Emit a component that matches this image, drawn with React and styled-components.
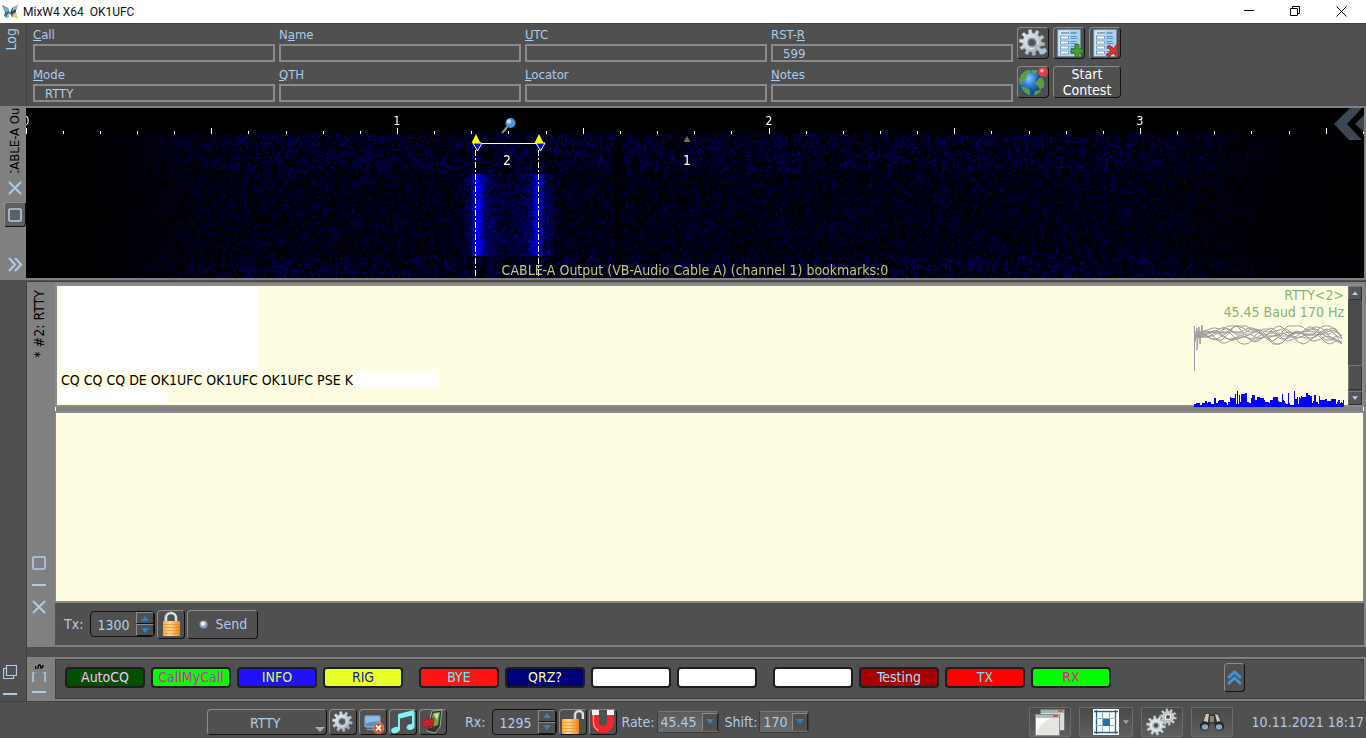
import React, { useLayoutEffect, useRef } from "react";
import styled, { createGlobalStyle } from "styled-components";

const GlobalStyle = createGlobalStyle`
  * { box-sizing: border-box; }
  body { margin: 0; background: #505050; }
  button, input, select, textarea { font: inherit; color: inherit; margin: 0; }
`;

const c = {
  bg: "#505050",
  edge: "#404040",
  grey: "#808080",
  light: "#8b8b8b",
  text: "#aecbe8",
  cream: "#fffde1",
};

/* ---------- shell ---------- */

const Window = styled.div`
  min-height: 100vh;
  display: flex;
  flex-direction: column;
  background: ${c.bg};
  color: ${c.text};
  font-family: "DejaVu Sans Condensed", "DejaVu Sans", sans-serif;
  font-size: 14px;
  line-height: 18px;
`;

const TitleBar = styled.header`
  height: 23px;
  flex: none;
  display: flex;
  align-items: center;
  background: #fff;
  color: #111;
  padding: 0 2px;
`;

const Title = styled.h1`
  margin: 0 0 0 4px;
  flex: 1;
  font-family: Roboto, "Noto Sans", sans-serif;
  font-size: 12px;
  font-weight: 400;
  line-height: 16px;
  white-space: pre;
`;

const CaptionButton = styled.button`
  width: 46px;
  height: 20px;
  padding: 0;
  border: 0;
  background: none;
  display: grid;
  place-items: center;
`;

const Vertical = styled.span`
  writing-mode: vertical-rl;
  transform: rotate(180deg);
  line-height: 18px;
  white-space: nowrap;
`;

const BevelButton = styled.button`
  width: ${(p) => p.$w || 29}px;
  height: ${(p) => p.$h || 29}px;
  flex: none;
  padding: 0;
  display: flex;
  align-items: center;
  justify-content: center;
  gap: 8px;
  border: 1px solid;
  border-color: ${c.light} #111 #111 ${c.light};
  border-radius: 4px;
  background: ${c.bg};
  color: ${(p) => p.$color || c.text};
  line-height: 16px;
`;

/* ---------- log panel ---------- */

const LogRow = styled.section`
  display: flex;
  height: 83px;
  flex: none;
`;

const LogTab = styled.div`
  width: 26px;
  flex: none;
  padding: 5px 0 0 2px;
`;

const LogBody = styled.div`
  flex: 1;
  display: flex;
  gap: 4px;
  padding: 3px 0 0 6px;
  border-left: 1px solid ${c.edge};
  border-top: 1px solid ${c.edge};
`;

const Fields = styled.form`
  flex: 0 1 980px;
  display: grid;
  grid-template-columns: repeat(4, 1fr);
  column-gap: 4px;
  row-gap: 4px;
  align-content: start;
`;

const Field = styled.div`
  display: flex;
  flex-direction: column;
  font-size: 13px;
`;

const FieldLabel = styled.label`
  line-height: 16px;
  height: 17px;
`;

const FieldInput = styled.input`
  width: 100%;
  height: 18px;
  margin-bottom: 1px;
  padding: 2px 0 0 10px;
  border: 2px solid ${c.light};
  background: ${c.bg};
  color: ${c.text};
  font-size: 13px;
`;

const LogButtons = styled.div`
  display: flex;
  flex-direction: column;
  gap: 7px;
`;

const ButtonRow = styled.div`
  display: flex;
  gap: 4px;
`;

/* ---------- waterfall ---------- */

const WaterfallRow = styled.section`
  display: flex;
  flex: none;
  height: 174px;
  padding: 2px 2px 2px 0;
  background: ${c.grey};
`;

const WaterfallTab = styled.div`
  width: 26px;
  flex: none;
  display: flex;
  flex-direction: column;
  align-items: center;
  padding-left: 3px;
  color: #000;
  font-size: 13px;
`;

const ClippedName = styled.div`
  height: 65px;
  margin-bottom: 7px;
  overflow: hidden;
  display: flex;
  flex-direction: column;
  justify-content: center;
`;

const TabIcon = styled.button`
  width: ${(p) => (p.$boxed ? 22 : 16)}px;
  height: ${(p) => (p.$boxed ? 25 : 16)}px;
  margin-top: ${(p) => p.$top || 0}px;
  flex: none;
  padding: 0;
  display: grid;
  place-items: center;
  border: ${(p) => (p.$boxed ? "1px solid" : "0")};
  border-color: #8f8f8f #111 #111 #8f8f8f;
  border-radius: 3px;
  background: ${(p) => (p.$boxed ? "#5f5f5f" : "none")};
`;

const Scope = styled.div`
  position: relative;
  flex: 1;
  min-width: 0;
  height: 170px;
  background: #000;
  overflow: hidden;
`;

const ScopeCanvas = styled.canvas`
  display: block;
  width: 100%;
  height: 170px;
`;

const ScopeOverlay = styled.svg`
  position: absolute;
  inset: 0;
  width: 100%;
  height: 100%;
`;

const ScopeCaption = styled.div`
  position: absolute;
  left: 0;
  right: 0;
  bottom: 0;
  text-align: center;
  color: #c6c66e;
  font-size: 14px;
  line-height: 16px;
`;

const ScopeCollapse = styled.button`
  position: absolute;
  top: 0;
  right: 0;
  padding: 0;
  border: 0;
  background: none;
  line-height: 0;
`;

/* ---------- workspace ---------- */

const Workspace = styled.div`
  flex: 1;
  display: flex;
  padding-top: 1px;
`;

const SideRail = styled.div`
  width: 26px;
  flex: none;
  display: flex;
  flex-direction: column;
  justify-content: flex-end;
  align-items: center;
  padding: 0 6px 0 0;
  gap: 8px;
`;

const WorkColumn = styled.div`
  flex: 1;
  min-width: 0;
  display: flex;
  flex-direction: column;
  gap: 10px;
  border-left: 1px solid ${c.edge};
  border-top: 1px solid ${c.edge};
`;

const Panel = styled.section`
  display: flex;
  flex: ${(p) => (p.$grow ? 1 : "none")};
  background: ${c.grey};
  padding: 2px 2px 2px 0;
`;

const PanelTab = styled.div`
  width: 28px;
  flex: none;
  display: flex;
  flex-direction: column;
  align-items: center;
  padding: ${(p) => p.$pad};
  color: #000;
`;

const TabSpacer = styled.div`
  flex: 1;
`;

const PanelBody = styled.div`
  flex: 1;
  min-width: 0;
  display: flex;
  flex-direction: column;
`;

const Received = styled.div`
  position: relative;
  height: 123px;
  display: flex;
  border: 2px solid ${c.light};
  background: ${c.cream};
  color: #000;
`;

const ReceivedText = styled.div`
  flex: 1;
  padding-left: 2px;
`;

const ReceivedLine = styled.p`
  margin: 0;
  height: 17px;
  padding-left: 2px;
  display: flex;
  line-height: 18px;
`;

const Blank = styled.div`
  width: ${(p) => p.$w}px;
  height: ${(p) => p.$h}px;
  background: #fff;
`;

const ModeReadout = styled.div`
  position: absolute;
  right: 18px;
  top: 1px;
  color: #80b878;
  text-align: right;
  line-height: 17px;
`;

const ScopePlot = styled.svg`
  position: absolute;
  right: 17px;
  bottom: -2px;
`;

const ScrollBar = styled.div`
  width: 14px;
  display: flex;
  flex-direction: column;
  background: #4a4a4a;
`;

const ScrollButton = styled.button`
  height: 14px;
  padding: 0;
  display: grid;
  place-items: center;
  border: 1px solid #777;
  border-right-color: #333;
  border-bottom-color: #333;
  background: #555;
`;

const ScrollThumb = styled.div`
  height: 25px;
  margin-top: auto;
  margin-bottom: 1px;
  border: 1px solid #777;
  border-right-color: #333;
  border-bottom-color: #333;
  background: #505050;
`;

const Splitter = styled.div`
  height: 4px;
  border-left: 1px solid #fff;
  border-right: 1px solid #fff;
  background: ${c.grey};
`;

const Transmit = styled.textarea`
  flex: 1;
  min-height: 60px;
  width: 100%;
  display: block;
  border: 1px solid ${c.light};
  border-width: 2px 1px;
  background: ${c.cream};
  color: #000;
  resize: none;
  outline: 0;
`;

const TxBar = styled.div`
  height: 42px;
  flex: none;
  display: flex;
  align-items: center;
  gap: 2px;
  padding: 0 0 0 9px;
  background: ${c.bg};
`;

const BarLabel = styled.label`
  margin-left: ${(p) => p.$left || 0}px;
  margin-right: ${(p) => p.$right || 0}px;
`;

const Spin = styled.div`
  width: 65px;
  height: 26px;
  flex: none;
  display: flex;
  overflow: hidden;
  border: 1px solid #111;
  border-radius: 4px;
`;

const SpinInput = styled.input`
  flex: 1;
  min-width: 0;
  padding: 2px 0 0 6px;
  border: 0;
  background: none;
`;

const SpinArrows = styled.div`
  width: 18px;
  display: flex;
  flex-direction: column;
`;

const SpinArrow = styled.button`
  flex: 1;
  padding: 0;
  display: grid;
  place-items: center;
  border: 1px solid;
  border-color: ${c.light} #111 #111 ${c.light};
  background: ${c.bg};
`;

/* ---------- macros ---------- */

const MacroBody = styled.div`
  flex: 1;
  height: 40px;
  display: flex;
  align-items: center;
  gap: 16px;
  padding: 0 9px 3px;
  border: 1px solid ${c.edge};
  background: ${c.bg};
`;

const MacroGroup = styled.div`
  display: flex;
  gap: 6px;
`;

const Macro = styled.button`
  width: 80px;
  height: 21px;
  padding: 0;
  border: 2px solid #1e1e1e;
  border-radius: 4px;
  background: ${(p) => p.$bg};
  color: ${(p) => p.$fg};
  font-size: 14px;
  line-height: 17px;
`;

const MacroToggle = styled(BevelButton)`
  margin-left: 97px;
`;

/* ---------- status bar ---------- */

const StatusBar = styled.footer`
  height: 37px;
  flex: none;
  display: flex;
  align-items: center;
  gap: 2px;
  padding: 3px 2px 0 207px;
  border-top: 1px solid ${c.edge};
`;

const SelectWrap = styled.div`
  position: relative;
  display: flex;
`;

const ModeSelect = styled.select`
  appearance: none;
  width: 120px;
  height: 26px;
  padding: 2px 0 0 42px;
  border: 1px solid;
  border-color: ${c.light} #111 #111 ${c.light};
  border-radius: 4px;
  background: ${c.bg};
`;

const ModeArrow = styled.svg`
  position: absolute;
  right: 2px;
  bottom: 3px;
  pointer-events: none;
`;

const SmallSelect = styled.select`
  appearance: none;
  width: ${(p) => p.$w}px;
  height: 22px;
  padding: 0 0 0 3px;
  border: 1px solid #3c3c3c;
  border-top-color: #777;
  border-radius: 2px;
  background: linear-gradient(#5c5c5c, #6c6c6c);
`;

const SmallArrow = styled.span`
  position: absolute;
  right: 1px;
  top: 2px;
  width: 16px;
  height: 18px;
  display: grid;
  place-items: center;
  border: 1px solid #222;
  border-color: ${c.light} #222 #5a5a5a ${c.light};
  background: ${c.bg};
  pointer-events: none;
`;

const Tools = styled.div`
  margin-left: auto;
  display: flex;
  align-items: center;
  gap: 8px;
`;

const ToolButton = styled.button`
  width: ${(p) => p.$w || 42}px;
  height: 30px;
  padding: ${(p) => (p.$menu ? "0 0 0 10px" : "0")};
  display: flex;
  align-items: center;
  justify-content: center;
  gap: 4px;
  border: 1px solid #6b6b6b;
  border-radius: 2px;
  background: linear-gradient(#494949, #5f5f5f);
`;

const Clock = styled.time`
  margin-left: 11px;
`;

/* ---------- drawings ---------- */

const CrossMark = () => (
  <svg width="14" height="14" viewBox="0 0 14 14">
    <path d="M1 1 13 13M13 1 1 13" stroke={c.text} strokeWidth="1.800" />
  </svg>
);

const SquareMark = () => (
  <svg width="14" height="14" viewBox="0 0 14 14">
    <rect x="1" y="1" width="12" height="12" rx="1" fill="none" stroke={c.text} strokeWidth="1.600" />
  </svg>
);

const DashMark = () => (
  <svg width="14" height="14" viewBox="0 0 14 14">
    <path d="M0 7H14" stroke={c.text} strokeWidth="2" />
  </svg>
);

const CascadeMark = () => (
  <svg width="14" height="14" viewBox="0 0 14 14">
    <path d="M3.5.5h10v10h-10zM3 3.500H.5v10h10V11" fill="none" stroke={c.text} strokeWidth="1.200" />
  </svg>
);

const BracketMark = () => (
  <svg width="14" height="11" viewBox="0 0 14 11">
    <path d="M1 0V10M13 0V10" fill="none" stroke={c.text} strokeWidth="1.500" />
    <path d="M2 .5h2M10 .5h2" stroke={c.text} opacity=".4" />
  </svg>
);

const Triangle = ({ down, w = 8, h = 5, fill = "#2f83c4" }) => (
  <svg width={w} height={h} viewBox="0 0 8 5">
    <path d={down ? "M0 0H8L4 5z" : "M0 5H8L4 0z"} fill={fill} />
  </svg>
);

const AppLogo = () => (
  <svg width="17" height="16" viewBox="0 0 17 16">
    <path d="M0 1 6 4 8 9 5 14 2 12 3 8z" fill="#35708f" />
    <path d="M0 1 7 5 6 8 3 7z" fill="#79b0c6" />
    <path d="M16 1 10 4 8 9 10 13 14 10 14 6z" fill="#27536f" />
    <path d="M16 1 11 4 10 7 14 5z" fill="#9cc0cf" />
    <path d="M10 11 14 8 16 15 12 13z" fill="#f2cf53" />
    <path d="M5 11 7 9 7 13 4 15z" fill="#9cc7da" />
  </svg>
);

const gearPath = (cx, cy, r1, r2, n) => {
  const pts = [];
  const step = (Math.PI * 2) / n;
  for (let i = 0; i < n; i++) {
    [[-0.3, r1], [-0.2, r2], [0.2, r2], [0.3, r1]].forEach(([o, r]) => {
      const a = (i + o) * step + 0.15;
      pts.push(`${(cx + r * Math.cos(a)).toFixed(1)} ${(cy + r * Math.sin(a)).toFixed(1)}`);
    });
  }
  return `M${pts.join("L")}z`;
};

const Gear = ({ size = 28, spanner }) => (
  <svg width={size} height={size} viewBox="0 0 28 28">
    <defs>
      <linearGradient id="steel" x1="0" y1="0" x2="1" y2="1">
        <stop offset="0" stopColor="#f2f6f8" />
        <stop offset=".6" stopColor="#bcc6cd" />
        <stop offset="1" stopColor="#8d979e" />
      </linearGradient>
    </defs>
    <path d={gearPath(13, 13.5, 9.5, 13, 10)} fill="url(#steel)" stroke="#8a949b" strokeWidth=".7" />
    <circle cx="13" cy="13.500" r="6" fill="#a5b1ba" stroke="#eef3f6" />
    <circle cx="13" cy="13.500" r="3.200" fill="#505050" stroke="#59646c" strokeWidth="1.300" />
    {spanner && <path d="M18 16 22 20 26 19 28 22 25 25 21 25.500 20 22 16 19z" fill="#b3c4d2" stroke="#8396a5" strokeWidth=".6" />}
  </svg>
);

const Sheet = ({ remove }) => (
  <svg width="28" height="28" viewBox="0 0 28 28">
    <rect x="3" y="1" width="22" height="26" fill="#d3e8f8" stroke="#9cc6e6" />
    <rect x="14" y="1.500" width="10.500" height="25" fill="#a9d0ee" />
    <path d="M6 4h8M15.500 4h6" stroke="#3d6f95" />
    {[7, 12, 17, 22].map((y) => (
      <g key={y}>
        <rect x="5.500" y={y} width="8" height="3" fill="#fff" stroke="#5a8db6" strokeWidth=".8" />
        <path d={`M15.500 ${y + 0.5}h6M15.500 ${y + 2.5}h7`} stroke="#5b90ba" />
      </g>
    ))}
    {remove ? (
      <path d="m16 18 2-2 4.500 3.500L26 15l2 1-3.500 6L28 26l-2 2-4-4-4 4-3-2 5-4z" fill="#dc342a" stroke="#8d120c" strokeWidth=".7" />
    ) : (
      <path d="M20 15.500h4v4.500h4v4h-4v4h-4v-4h-4v-4h4z" fill="#48a12c" stroke="#1d6410" strokeWidth=".8" />
    )}
  </svg>
);

const Globe = () => (
  <svg width="30" height="30" viewBox="0 0 30 30">
    <defs>
      <radialGradient id="sea" cx=".4" cy=".35">
        <stop offset="0" stopColor="#8ccaff" />
        <stop offset=".5" stopColor="#3484da" />
        <stop offset="1" stopColor="#164c94" />
      </radialGradient>
    </defs>
    <circle cx="13.500" cy="15.500" r="13" fill="url(#sea)" />
    <path d="M1 13Q3 5 10 3l3 1-3 3-2 1 1 3-4 2-1 4-2 1z" fill="#5e9c3c" />
    <path d="M14 3q3-1 6 1l-3 3-3-1zM20 12l4-2q3 5 2 10l-4 3-2-4-3-2 1-3z" fill="#5e9c3c" />
    <path d="M3 20l4 0 5 3 0 5Q6 27 3 20zM17 24l5-1 1 1q-3 4-7 4z" fill="#5e9c3c" />
    <path d="m18 14 5-8" stroke="#2b2b2b" />
    <circle cx="25" cy="5" r="4.800" fill="#ec3b40" />
    <circle cx="24" cy="3.800" r="1.800" fill="#ffc2c2" />
  </svg>
);

const Padlock = ({ open }) => (
  <svg width="22" height="26" viewBox="0 0 22 26">
    <defs>
      <linearGradient id="brass">
        <stop offset="0" stopColor="#ffac30" />
        <stop offset=".4" stopColor="#ffd68e" />
        <stop offset="1" stopColor="#ee8616" />
      </linearGradient>
    </defs>
    <path
      d={open ? "M13 12V6a4 4 0 0 1 8 0v4" : "M6 12V7a5 5 0 0 1 10 0v5"}
      fill="none"
      stroke="#dde3e8"
      strokeWidth="2.500"
    />
    <path
      d={open ? "M12 12V6a5 5 0 0 1 5-5" : "M4.500 12V7a6 6 0 0 1 6-6"}
      fill="none"
      stroke="#9099a0"
      strokeWidth=".8"
    />
    <rect x={open ? 0 : 3} y="10" width="17" height="15" rx="1" fill="url(#brass)" />
    <path
      d={open ? "M0 13.500H17M0 16.500H17M0 19.500H17M0 22.500H17" : "M3 13.500H20M3 16.500H20M3 19.500H20M3 22.500H20"}
      stroke="#d9801a"
      opacity=".5"
    />
  </svg>
);

const Bullet = () => (
  <svg width="9" height="9" viewBox="0 0 9 9">
    <circle cx="4.500" cy="4.500" r="4" fill="#8b9bb0" />
    <circle cx="4" cy="3.800" r="2.300" fill="#e6eefc" />
  </svg>
);

const MonitorOff = () => (
  <svg width="24" height="24" viewBox="0 0 24 24">
    <rect x="4" y="6" width="15" height="11" rx="1" fill="#4f8fca" stroke="#c4d6e5" strokeWidth=".8" />
    <path d="M5 7h13v4L5 13z" fill="#8dbde5" />
    <path d="M6 19.500h8" stroke="#8a98a3" strokeWidth="1.500" />
    <circle cx="17.500" cy="18" r="5.300" fill="#e2491f" stroke="#f1a58c" strokeWidth=".7" />
    <path d="m15 15.500 5 5m0-5-5 5" stroke="#fff" strokeWidth="1.800" />
  </svg>
);

const Notes = () => (
  <svg width="26" height="26" viewBox="0 0 26 26">
    <path d="M8 5 24 1V6L8 10zM8 5H10V21H8zM22 3h2.500V18H22z" fill="#7df4f6" />
    <ellipse cx="5.500" cy="21" rx="4.500" ry="3" fill="#7df4f6" transform="rotate(-20 5.500 21)" />
    <ellipse cx="20.500" cy="18" rx="4" ry="2.800" fill="#7df4f6" transform="rotate(-20 20.500 18)" />
  </svg>
);

const PhoneImport = () => (
  <svg width="26" height="26" viewBox="0 0 26 26">
    <path d="M12 2 22 1 20 18 15 24 7 22z" fill="#2f3730" stroke="#b9beb9" strokeWidth=".8" />
    <path d="M13 4 20 3 18 16 10 19z" fill="#6da648" />
    <path d="M14 5 19 4 17 11z" fill="#c0e6a0" />
    <path d="M1 14 9 8v3l5-2-1 9-5-1v4z" fill="#c8222a" stroke="#7c0f13" strokeWidth=".6" />
  </svg>
);

const Magnet = () => (
  <svg width="24" height="25" viewBox="0 0 24 25">
    <path d="M1 5v8a11 11 0 0 0 22 0V5h-7v8a4 4 0 0 1-8 0V5z" fill="#f0262a" />
    <path d="M2.500 6v7a9.500 9.500 0 0 0 5 8.500" fill="none" stroke="#ff8a83" strokeWidth="1.500" />
    <path d="M1 1h7v5H1zM16 1h7v5h-7z" fill="#f5f1f1" />
  </svg>
);

const Windows = () => (
  <svg width="30" height="28" viewBox="0 0 30 28">
    <rect x="5.500" y="1.500" width="24" height="21" fill="#d8dcdc" stroke="#737b7b" />
    <rect x="6" y="2" width="23" height="3" fill="#a3b2b3" />
    <rect x="23" y="2" width="5" height="2" fill="#e2573f" />
    <rect x=".5" y="6.500" width="24" height="21" fill="#e6e6e0" stroke="#8a9090" />
    <rect x="1" y="7" width="23" height="3" fill="#aebcbd" />
    <rect x="18" y="7" width="5" height="2" fill="#e2573f" />
    <path d="M1 27Q3 16 16 10H1z" fill="#fbfbf8" />
  </svg>
);

const GridIcon = () => (
  <svg width="26" height="26" viewBox="0 0 26 26">
    <rect width="26" height="26" fill="#fff" />
    <path d="M1 2.500H25M1 23.500H25M3.500 1V25M22.500 1V25" stroke="#1f6092" strokeWidth="1.300" />
    <path d="M3 9.500H23M3 16.500H23M9.500 3V23M16.500 3V23" stroke="#8fb4cf" />
    <rect x="10" y="10" width="7" height="7" fill="#2370ad" />
  </svg>
);

const TwoGears = () => (
  <svg width="32" height="28" viewBox="0 0 32 28">
    <path d={gearPath(22, 9, 6, 8.5, 10)} fill="#cfd6da" stroke="#858e94" strokeWidth=".6" />
    <circle cx="22" cy="9" r="4" fill="#e8edf0" stroke="#8a949b" strokeWidth=".6" />
    <circle cx="22" cy="9" r="2" fill="#555" />
    <path d={gearPath(10, 17.5, 7, 9.8, 10)} fill="#d8dfe3" stroke="#858e94" strokeWidth=".6" />
    <circle cx="10" cy="17.500" r="4.500" fill="#b5c0c8" stroke="#f2f5f7" />
    <circle cx="10" cy="17.500" r="2.300" fill="#48525a" />
  </svg>
);

const Binoculars = () => (
  <svg width="26" height="22" viewBox="0 0 26 22">
    <path d="M7 3 10 2 13 4 16 2 19 3 24 14 18 17 14 12H12L8 17 2 14z" fill="#38342e" />
    <path d="M7 3 10 3 9 11 4 12zM16 3l3 1 3 8-4-1z" fill="#cfc7b4" />
    <path d="M11 5h4v6h-4z" fill="#8c8372" />
    <circle cx="5.500" cy="15" r="4.700" fill="#29282a" />
    <circle cx="20.500" cy="15" r="4.700" fill="#29282a" />
    <ellipse cx="6" cy="16" rx="3.200" ry="2.800" fill="#7facc2" />
    <ellipse cx="20" cy="16" rx="3.200" ry="2.800" fill="#7facc2" />
  </svg>
);

/* repeatable pseudo random numbers in 0..1 */
const makeRandom = (seed) => () => {
  seed = (seed * 1664525 + 1013904223) >>> 0;
  return seed / 4294967296;
};

const smooth = (a, b, x) => {
  const t = Math.min(1, Math.max(0, (x - a) / (b - a)));
  return t * t * (3 - 2 * t);
};

const bell = (x, centre, width) => Math.exp(-(((x - centre) / width) ** 2));

const PX_PER_TICK = 37.15;
const SCALE_H = 26;

function paintWaterfall(canvas) {
  const w = (canvas.width = canvas.clientWidth);
  const h = (canvas.height = 170);
  const ctx = canvas.getContext("2d");
  const img = ctx.createImageData(w, h);
  const rnd = makeRandom(7);
  let above = new Float32Array(w).fill(0.5);
  for (let y = SCALE_H; y < h; y++) {
    const row = new Float32Array(w);
    let prev = 0.5;
    const signal = y > 65 && y < 148;
    const band = y < 64 || y > 148 ? 1 : 0.7;
    for (let x = 0; x < w; x++) {
      prev = 0.65 * rnd() + 0.35 * prev;
      row[x] = 0.6 * prev + 0.4 * above[x];
      let env = smooth(30, 240, x) * (1 - 0.9 * smooth(1080, 1310, x)) * band;
      if (x > 588 && x < 596) env *= 0.3;
      let v = Math.max(0, row[x] - 0.42) * 310 * env;
      if (signal) {
        const core = bell(x, 452, 5) + bell(x, 511, 4);
        const halo = bell(x, 453, 13) + bell(x, 511, 12);
        const glow = x > 440 && x < 528 ? 45 : 0;
        v += core * 140 + (halo * 110 + glow) * row[x];
      }
      img.data[(y * w + x) * 4 + 2] = Math.min(235, v);
    }
    above = row;
  }
  for (let i = 3; i < img.data.length; i += 4) img.data[i] = 255;
  ctx.putImageData(img, 0, 0);
}

function Waterfall() {
  const ref = useRef(null);
  useLayoutEffect(() => {
    const paint = () => paintWaterfall(ref.current);
    paint();
    window.addEventListener("resize", paint);
    return () => window.removeEventListener("resize", paint);
  }, []);
  return (
    <Scope>
      <ScopeCanvas ref={ref} />
      <ScopeOverlay fontSize="12" fill="#fff" textAnchor="middle">
        {Array.from({ length: 52 }, (_, i) => (
          <rect key={i} x={Math.floor(i * PX_PER_TICK)} y={i % 5 ? 23 : 20} width="1" height={i % 5 ? 3 : 6} />
        ))}
        {[0, 1, 2, 3].map((n) => (
          <text key={n} x={Math.floor(n * 371.5)} y="17">{n}</text>
        ))}
        <path d="M449.500 42V170M512.500 42V170" stroke="#fff" strokeDasharray="6 2 2 2" />
        <path d="M451 35.500H515" stroke="#fff" />
        {[450, 513].map((x) => (
          <g key={x}>
            <path d={`M${x - 3} 35h9l-4.500 8z`} fill="#00f" stroke="#fff" />
            <path d={`M${x} 26l4.500 9h-9z`} fill="#ff0" />
          </g>
        ))}
        <path d="M661 28l3.500 6h-7z" fill="#7d6a14" />
        <path d="M476 25 482 18" stroke="#8d8d8d" strokeWidth="2" />
        <circle cx="484.500" cy="15" r="5" fill="#4d95d8" />
        <circle cx="483" cy="13.500" r="2.200" fill="#b6dcfa" />
        <g fontSize="14">
          <text x="481" y="57">2</text>
          <text x="661" y="57">1</text>
        </g>
      </ScopeOverlay>
      <ScopeCaption>CABLE-A Output (VB-Audio Cable A) (channel 1) bookmarks:0</ScopeCaption>
      <ScopeCollapse aria-label="Collapse">
        <svg width="30" height="32" viewBox="0 0 30 32">
          <path d="M16 0H28L13 16 28 32H15L0 16zM30 7V24L21 16z" fill="#3d4751" />
        </svg>
      </ScopeCollapse>
    </Scope>
  );
}

const eyeTraces = (() => {
  const rnd = makeRandom(21);
  return Array.from({ length: 10 }, (_, k) => {
    const p = rnd() * 6;
    const q = rnd() * 6;
    const f = 0.05 + rnd() * 0.09;
    const a = 3 + rnd() * 5;
    let d = "";
    for (let x = 0; x <= 148; x += 3) {
      const taper = (0.5 + 0.5 * smooth(0, 40, x)) * (1 - 0.4 * smooth(125, 148, x));
      const droop = 6 * smooth(140, 148, x);
      const y = 12 + (k - 4) * 0.6 + taper * (a * Math.sin(x * f + p) + 3 * Math.sin(x * 0.22 + q)) + droop;
      d += `${x ? "L" : "M"}${x + 2} ${Math.max(4, Math.min(22, y)).toFixed(0)}`;
    }
    return d;
  });
})();

const spectrumPath = (() => {
  const rnd = makeRandom(5);
  let d = "";
  let h = 3;
  for (let x = 0; x < 150; x++) {
    const env = 3 + 9 * smooth(0, 45, x) * (1 - 0.7 * smooth(115, 145, x));
    if (rnd() > 0.35) h = 2 + rnd() * env;
    const peak = x === 43 || x === 100 ? 16 : h;
    d += `M${x + 1.5} 85V${(85 - peak).toFixed(0)}`;
  }
  return d;
})();

const SignalPlots = () => (
  <ScopePlot width="152" height="85" viewBox="0 0 152 85">
    <g fill="none" stroke="#9c9ca4" strokeWidth="1">
      {eyeTraces.map((d, i) => <path key={i} d={d} />)}
      <path d="M1.500 49V4M2 20 4 6 4 28 6 5 7 22 9 3 10 16" />
    </g>
    <path d={spectrumPath} stroke="#00f" />
  </ScopePlot>
);

/* ---------- content ---------- */

const FIELDS = [
  ["call", "", "C", "all", ""],
  ["name", "N", "a", "me", ""],
  ["utc", "", "U", "TC", ""],
  ["rst", "RST-", "R", "", "599"],
  ["mode", "", "M", "ode", "RTTY"],
  ["qth", "", "Q", "TH", ""],
  ["locator", "", "L", "ocator", ""],
  ["notes", "", "N", "otes", ""],
];

const MACROS = [
  [
    ["AutoCQ", "#005000", "#ffc0ff"],
    ["CallMyCall", "#00ff00", "#e020c0"],
    ["INFO", "#2010ff", "#d8ff40"],
    ["RIG", "#e8ff28", "#2020a0"],
  ],
  [
    ["BYE", "#ff1414", "#50f0f0"],
    ["QRZ?", "#00007c", "#ffff90"],
    ["", "#ffffff", "#000"],
    ["", "#ffffff", "#000"],
  ],
  [
    ["", "#ffffff", "#000"],
    ["Testing", "#a80000", "#90e8ff"],
    ["TX", "#ff0000", "#60e8f0"],
    ["RX", "#00ff00", "#e02090"],
  ],
];

const Spinner = ({ id, value }) => (
  <Spin>
    <SpinInput id={id} defaultValue={value} />
    <SpinArrows>
      <SpinArrow aria-label="Increase"><Triangle /></SpinArrow>
      <SpinArrow aria-label="Decrease"><Triangle down /></SpinArrow>
    </SpinArrows>
  </Spin>
);

export default function App() {
  return (
    <Window>
      <GlobalStyle />
      <TitleBar>
        <AppLogo />
        <Title>MixW4 X64  OK1UFC</Title>
        <CaptionButton aria-label="Minimize">
          <svg width="11" height="11"><path d="M0 4.500H10" stroke="#000" /></svg>
        </CaptionButton>
        <CaptionButton aria-label="Restore">
          <svg width="11" height="11"><path d="M.5 2.500h7v7h-7zM2.500 2V.5h7v7H8" fill="none" stroke="#000" /></svg>
        </CaptionButton>
        <CaptionButton aria-label="Close">
          <svg width="11" height="11"><path d="M.5.5l10 10M10.500.5l-10 10" stroke="#000" /></svg>
        </CaptionButton>
      </TitleBar>

      <LogRow>
        <LogTab><Vertical>Log</Vertical></LogTab>
        <LogBody>
          <Fields>
            {FIELDS.map(([id, before, key, after, value]) => (
              <Field key={id}>
                <FieldLabel htmlFor={id}>{before}<u>{key}</u>{after}</FieldLabel>
                <FieldInput id={id} defaultValue={value} />
              </Field>
            ))}
          </Fields>
          <LogButtons>
            <ButtonRow>
              <BevelButton $w={32} $h={32} aria-label="Settings"><Gear spanner /></BevelButton>
              <BevelButton $w={32} $h={32} aria-label="Add record"><Sheet /></BevelButton>
              <BevelButton $w={32} $h={32} aria-label="Delete record"><Sheet remove /></BevelButton>
            </ButtonRow>
            <ButtonRow>
              <BevelButton $w={32} $h={32} aria-label="Map"><Globe /></BevelButton>
              <BevelButton $w={68} $h={32} $color="#fff">Start<br />Contest</BevelButton>
            </ButtonRow>
          </LogButtons>
        </LogBody>
      </LogRow>

      <WaterfallRow>
        <WaterfallTab>
          <ClippedName><Vertical>CABLE-A Out</Vertical></ClippedName>
          <TabIcon aria-label="Close"><CrossMark /></TabIcon>
          <TabIcon $boxed $top={6} aria-label="Float"><SquareMark /></TabIcon>
          <TabIcon $top={29} aria-label="More">
            <svg width="14" height="15" viewBox="0 0 14 15">
              <path d="m1 1 6 6.500-6 6.500M7 1l6 6.500L7 14" fill="none" stroke={c.text} strokeWidth="2" />
            </svg>
          </TabIcon>
        </WaterfallTab>
        <Waterfall />
      </WaterfallRow>

      <Workspace>
        <SideRail>
          <CascadeMark />
          <DashMark />
        </SideRail>
        <WorkColumn>
          <Panel $grow>
            <PanelTab $pad="6px 4px 30px 0">
              <Vertical>* #2: RTTY</Vertical>
              <TabSpacer />
              <TabIcon aria-label="Float"><SquareMark /></TabIcon>
              <TabIcon $top={6} aria-label="Minimize"><DashMark /></TabIcon>
              <TabIcon $top={6} aria-label="Close"><CrossMark /></TabIcon>
            </PanelTab>
            <PanelBody>
              <Received>
                <ReceivedText>
                  <Blank $w={199} $h={85} />
                  <ReceivedLine>
                    CQ CQ CQ DE OK1UFC OK1UFC OK1UFC PSE K
                    <Blank $w={85} $h={16} />
                  </ReceivedLine>
                  <Blank $w={109} $h={15} />
                </ReceivedText>
                <ModeReadout>RTTY&lt;2&gt;<br />45.45 Baud 170 Hz</ModeReadout>
                <SignalPlots />
                <ScrollBar>
                  <ScrollButton aria-label="Scroll up"><Triangle w={6} h={4} fill={c.text} /></ScrollButton>
                  <ScrollThumb />
                  <ScrollButton aria-label="Scroll down"><Triangle down w={6} h={4} fill={c.text} /></ScrollButton>
                </ScrollBar>
              </Received>
              <Splitter />
              <Transmit aria-label="Transmit text" />
              <TxBar>
                <BarLabel $right={5} htmlFor="tx">Tx:</BarLabel>
                <Spinner id="tx" value="1300" />
                <BevelButton $w={28} aria-label="Lock transmit frequency"><Padlock /></BevelButton>
                <BevelButton $w={71}><Bullet />Send</BevelButton>
              </TxBar>
            </PanelBody>
          </Panel>

          <Panel>
            <PanelTab $pad="5px 4px 0 0">
              <svg width="9" height="5" viewBox="0 0 9 5">
                <path d="M.7 5V2M3 5Q3 1 4.500 1T6 4Q8 4 8 1" fill="none" stroke="#000" strokeWidth="1.300" />
              </svg>
              <TabSpacer />
              <BracketMark />
              <TabSpacer />
              <DashMark />
            </PanelTab>
            <MacroBody>
              {MACROS.map((group, g) => (
                <MacroGroup key={g}>
                  {group.map(([name, bg, fg], i) => (
                    <Macro key={i} $bg={bg} $fg={fg} aria-label={name || "Empty macro"}>{name}</Macro>
                  ))}
                </MacroGroup>
              ))}
              <MacroToggle $w={21} aria-label="Collapse macros">
                <svg width="15" height="16" viewBox="0 0 15 16">
                  <path d="M1 8 7.500 2 14 8M1 14 7.500 8 14 14" fill="none" stroke="#3e96da" strokeWidth="3" />
                </svg>
              </MacroToggle>
            </MacroBody>
          </Panel>
        </WorkColumn>
      </Workspace>

      <StatusBar>
        <SelectWrap>
          <ModeSelect aria-label="Mode" defaultValue="RTTY"><option>RTTY</option></ModeSelect>
          <ModeArrow width="10" height="5" viewBox="0 0 10 5"><path d="M0 0H10L5 5z" fill="#9aabbc" /></ModeArrow>
        </SelectWrap>
        <BevelButton $w={28} $h={26} aria-label="Mode settings"><Gear size={22} /></BevelButton>
        <BevelButton $w={28} $h={26} aria-label="Clear screen"><MonitorOff /></BevelButton>
        <BevelButton $w={28} $h={26} aria-label="Sound"><Notes /></BevelButton>
        <BevelButton $w={28} $h={26} aria-label="Import"><PhoneImport /></BevelButton>
        <BarLabel $left={16} $right={5} htmlFor="rx">Rx:</BarLabel>
        <Spinner id="rx" value="1295" />
        <BevelButton $w={28} $h={26} aria-label="Unlock receive frequency"><Padlock open /></BevelButton>
        <BevelButton $w={28} $h={26} aria-label="Snap"><Magnet /></BevelButton>
        <BarLabel $left={2} htmlFor="rate">Rate:</BarLabel>
        <SelectWrap>
          <SmallSelect $w={62} id="rate" defaultValue="45.45"><option>45.45</option></SmallSelect>
          <SmallArrow><Triangle down /></SmallArrow>
        </SelectWrap>
        <BarLabel $left={4} htmlFor="shift">Shift:</BarLabel>
        <SelectWrap>
          <SmallSelect $w={50} id="shift" defaultValue="170"><option>170</option></SmallSelect>
          <SmallArrow><Triangle down /></SmallArrow>
        </SelectWrap>
        <Tools>
          <ToolButton aria-label="Windows"><Windows /></ToolButton>
          <ToolButton $w={54} $menu aria-label="Layout">
            <GridIcon />
            <Triangle down w={6} h={4} fill="#9aabbc" />
          </ToolButton>
          <ToolButton aria-label="Configure"><TwoGears /></ToolButton>
          <ToolButton aria-label="Find"><Binoculars /></ToolButton>
          <Clock>10.11.2021 18:17</Clock>
        </Tools>
      </StatusBar>
    </Window>
  );
}
